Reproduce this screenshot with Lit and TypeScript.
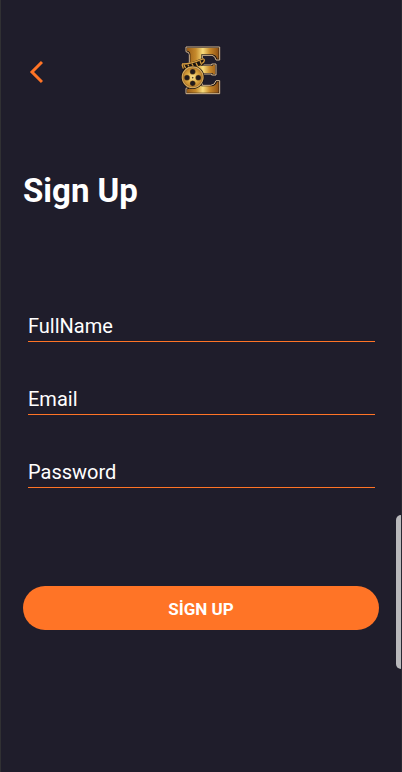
import { LitElement, html, css } from "lit";
import { customElement } from "lit/decorators.js";

const FIELDS = [
  { id: "fullname", label: "FullName", type: "text", autocomplete: "name" },
  { id: "email", label: "Email", type: "email", autocomplete: "email" },
  { id: "password", label: "Password", type: "password", autocomplete: "new-password" },
];

@customElement("film-logo")
export class FilmLogo extends LitElement {
  static styles = css`
    :host {
      display: block;
    }
    .mark {
      display: block;
      width: 40px;
      height: 49px;
    }
  `;

  render() {
    return html`
      <svg class="mark" viewBox="33 30 120 147" role="img" aria-label="Film logo">
        <defs>
          <linearGradient id="gold" x1="0" y1="0" x2="1" y2="0">
            <stop offset="0" stop-color="#9a5c16" />
            <stop offset="0.28" stop-color="#c58a2c" />
            <stop offset="0.5" stop-color="#f8dc7c" />
            <stop offset="0.72" stop-color="#c98a2a" />
            <stop offset="1" stop-color="#8e5014" />
          </linearGradient>
          <radialGradient id="reel" cx="0.5" cy="0.5" r="0.5">
            <stop offset="0" stop-color="#ffe894" />
            <stop offset="0.6" stop-color="#d9a53f" />
            <stop offset="1" stop-color="#bb7c25" />
          </radialGradient>
        </defs>
        <path
          d="M48 33H149V72H138Q136 60 126 58H97V87H125V84H138V117H125V114H97V148H122Q135 147 138 134H149V173H48V157Q58 156 58 148V56Q58 48 48 47Z"
          fill="#17110f" stroke="#d8b990" stroke-width="3" stroke-linejoin="round"
        />
        <path
          d="M51 36H146V68H141Q138 56 126 55H94V90H128V87H135V114H128V111H94V151H124Q137 150 141 137H146V170H51V160Q61 158 61 149V55Q61 46 51 44Z"
          fill="url(#gold)"
        />
        <path d="M35 84Q57 84 96 67L105 72L101 86Q68 94 38 101Z" fill="#1b1410" />
        <path
          d="M36 84Q60 85 95 70M42 87L48 99M54 86L59 97M66 83L71 94M78 80L83 91M90 75L95 86M36 85L40 98M95 70Q103 66 103 74Q102 80 96 82"
          fill="none" stroke="#d59c40" stroke-width="4"
        />
        <circle cx="68" cy="124" r="35" fill="#17110f" />
        <circle cx="68" cy="124" r="31" fill="url(#reel)" stroke="#d8ad60" stroke-width="4" />
        <circle cx="68" cy="124" r="29" fill="none" stroke="#704217" stroke-width="1" />
        <g fill="#211a1b" stroke="#8f6122" stroke-width="1">
          <circle cx="68" cy="107" r="8" />
          <circle cx="51" cy="125" r="8" />
          <circle cx="85" cy="125" r="8" />
          <circle cx="68" cy="142" r="8" />
          <circle cx="68" cy="125" r="2" />
        </g>
      </svg>
    `;
  }
}

@customElement("app-root")
export class AppRoot extends LitElement {
  static styles = css`
    :host {
      display: block;
      position: relative;
      box-sizing: border-box;
      min-height: 100vh;
      padding: 46px 22px 0;
      border-left: 1px solid #303033;
      border-right: 1px solid #282832;
      background: #1f1d2b;
      color: #ffffff;
      font-family: Roboto, "Liberation Sans", sans-serif;
    }
    .bar {
      display: grid;
      grid-template-columns: 1fr auto 1fr;
      align-items: center;
    }
    .back {
      justify-self: start;
      display: block;
      padding: 4px 6px 2px;
      border: 0;
      background: none;
      cursor: pointer;
    }
    .chevron {
      display: block;
      width: 14px;
      height: 24px;
    }
    .title {
      margin: 76px 0 0;
      font-size: 33px;
      line-height: 40px;
      font-weight: 700;
    }
    .form {
      margin-top: 91px;
    }
    .fields {
      display: grid;
      gap: 33px;
      padding: 0 4px 0 5px;
    }
    .input {
      display: block;
      box-sizing: border-box;
      width: 100%;
      height: 40px;
      padding: 8px 0 0;
      border: 0;
      border-bottom: 1px solid #ff7426;
      border-radius: 0;
      outline: 0;
      background: transparent;
      color: inherit;
      font: 400 20px/24px Roboto, "Liberation Sans", sans-serif;
    }
    .input::placeholder {
      color: #ffffff;
      opacity: 1;
    }
    .submit {
      display: block;
      width: 100%;
      height: 44px;
      margin-top: 98px;
      padding: 2px 0 0;
      border: 0;
      border-radius: 22px;
      background: #ff7426;
      color: #ffffff;
      font: 700 17px/20px Roboto, "Liberation Sans", sans-serif;
      cursor: pointer;
    }
    .thumb {
      position: absolute;
      top: 515px;
      right: 0;
      width: 5px;
      height: 154px;
      border-radius: 5px 0 0 5px;
      background: #b9b9bc;
    }
  `;

  render() {
    return html`
      <header class="bar">
        <button class="back" type="button" aria-label="Back">
          <svg class="chevron" viewBox="0 0 14 24" aria-hidden="true">
            <path d="M13 2L3 12L13 22" fill="none" stroke="#ff7426" stroke-width="3" />
          </svg>
        </button>
        <film-logo></film-logo>
      </header>
      <main>
        <h1 class="title">Sign Up</h1>
        <form class="form" @submit=${(e: Event) => e.preventDefault()}>
          <div class="fields">
            ${FIELDS.map(
              (f) => html`<label for=${f.id}>
                <input
                  class="input"
                  id=${f.id}
                  name=${f.id}
                  type=${f.type}
                  placeholder=${f.label}
                  aria-label=${f.label}
                  autocomplete=${f.autocomplete}
                />
              </label>`
            )}
          </div>
          <button class="submit" type="submit">SİGN UP</button>
        </form>
      </main>
      <div class="thumb" aria-hidden="true"></div>
    `;
  }
}
